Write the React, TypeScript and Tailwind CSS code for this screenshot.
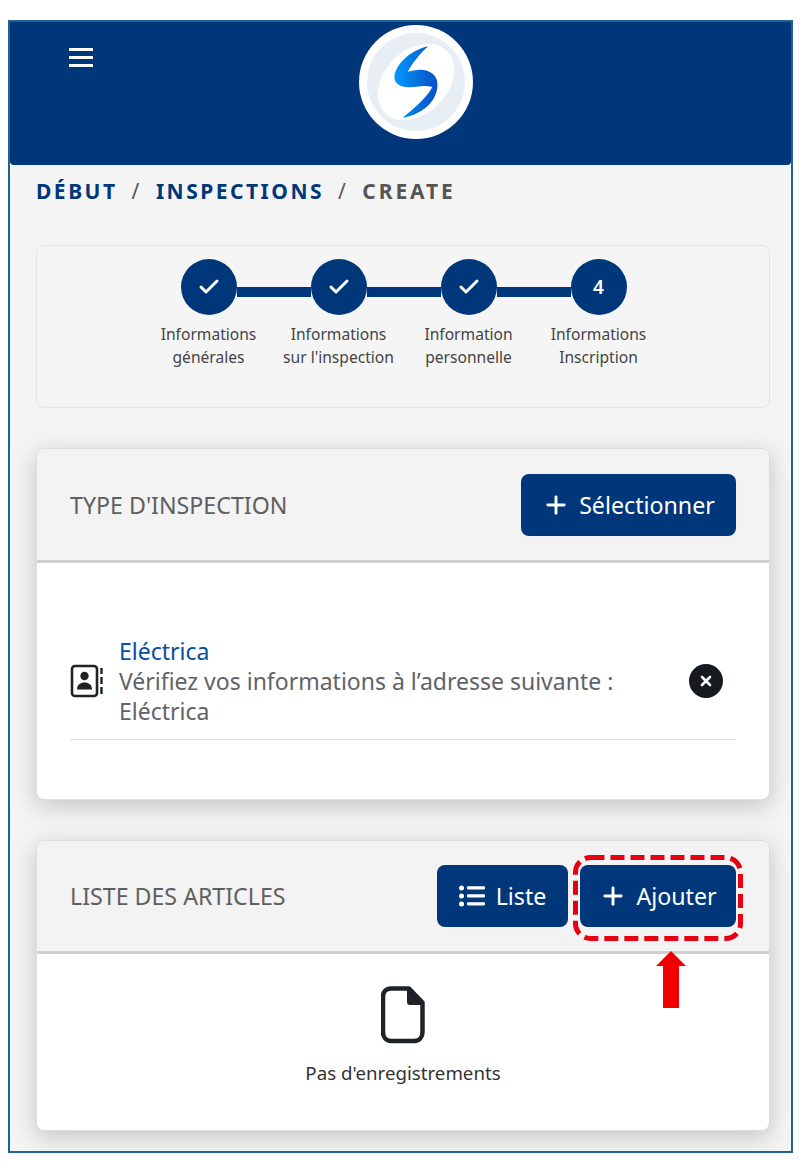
import { Check, Plus } from "lucide-react";

const FONT = "font-['Noto_Sans','Open_Sans',sans-serif]";

const STEPS = [
  { top: "Informations", bottom: "générales", done: true },
  { top: "Informations", bottom: "sur l'inspection", done: true },
  { top: "Information", bottom: "personnelle", done: true },
  { top: "Informations", bottom: "Inscription", done: false },
];

const Logo = () => (
  <div className="mt-[3px] ml-[266px] flex h-[114px] w-[114px] items-center justify-center rounded-full bg-white">
    <svg width="98" height="98" viewBox="0 0 96 96">
      <defs>
        <linearGradient id="swoosh" x1="0" y1="0" x2="1" y2="0">
          <stop offset="0" stopColor="#0098fd" />
          <stop offset="1" stopColor="#0a4fc4" />
        </linearGradient>
      </defs>
      <circle cx="48" cy="48" r="48" fill="#e7eff5" />
      <ellipse cx="48" cy="48" rx="43" ry="31" transform="rotate(-45 48 48)" fill="#fff" />
      <path
        d="M60 13 C45 16 30 28 27 41 C26 48 30 52 38 53 C46 54 55 50 64 53 C60 62 45 75 35 83 C50 81 68 70 69 52 C70 42 62 36 52 36 C48 36 44 37 40 38 C44 30 52 20 60 13 Z"
        fill="url(#swoosh)"
      />
    </svg>
  </div>
);

const Header = () => (
  <header className="flex h-[143px] rounded-b-[4px] bg-[#00377a] pl-[59px]">
    <div className="mt-[26px] flex h-[19px] w-[24px] flex-col justify-between">
      <span className="h-[3px] bg-white" />
      <span className="h-[3px] bg-white" />
      <span className="h-[3px] bg-white" />
    </div>
    <Logo />
  </header>
);

const Breadcrumb = () => (
  <nav className="mt-[12px] flex items-center pl-[26px] text-[21px] leading-[28px] font-bold tracking-[2.5px] text-[#00377a]">
    <span>DÉBUT</span>
    <span className="mx-[14px] font-normal text-[#555]">/</span>
    <span>INSPECTIONS</span>
    <span className="mx-[14px] font-normal text-[#555]">/</span>
    <span className="tracking-[2.9px] text-[#555]">CREATE</span>
  </nav>
);

const Stepper = () => (
  <section className="mt-[40px] mr-[21px] ml-[26px] h-[163px] rounded-[8px] border border-[#e2e6ea] bg-[#f5f5f5] pt-[13px] pl-[1px]">
    <div className="flex justify-center">
      {STEPS.map((s, i) => (
        <div key={i} className="flex items-center">
          <div className="flex h-[56px] w-[56px] items-center justify-center rounded-full bg-[#00377a] text-[19px] font-semibold text-white">
            {s.done ? <Check size={24} strokeWidth={3} /> : "4"}
          </div>
          {i < 3 && <div className="mt-[9px] h-[10px] w-[74px] bg-[#00377a]" />}
        </div>
      ))}
    </div>
    <div className="mt-[8px] flex justify-center text-center text-[15.6px] leading-[23px] text-[#444]">
      {STEPS.map((s, i) => (
        <div key={i} className="w-[130px] whitespace-nowrap">
          <div>{s.top}</div>
          <div>{s.bottom}</div>
        </div>
      ))}
    </div>
  </section>
);

const ActionButton = ({ children, width }: { children: React.ReactNode; width: string }) => (
  <button className={`flex h-[62px] items-center justify-center gap-[9px] rounded-[8px] bg-[#00377a] text-[23.2px] text-white ${width}`}>
    {children}
  </button>
);

const Card = ({
  title,
  actions,
  children,
  className,
  headerClass,
}: {
  title: string;
  actions: React.ReactNode;
  children: React.ReactNode;
  className: string;
  headerClass: string;
}) => (
  <section className={`mr-[21px] ml-[26px] overflow-hidden rounded-[8px] border border-[#dcdcdc] bg-white shadow-[0_6px_24px_rgba(0,0,0,0.2)] ${className}`}>
    <div className={`flex items-center justify-between border-b-[3px] border-[#cfcfcf] bg-[#f3f3f3] pr-[33px] pl-[33px] ${headerClass}`}>
      <h2 className="text-[23.2px] text-[#5f5f5f]">{title}</h2>
      <div className="flex gap-[12px]">{actions}</div>
    </div>
    {children}
  </section>
);

const ContactIcon = () => (
  <svg width="34" height="34" viewBox="0 0 34 34" fill="none">
    <rect x="2" y="2" width="25" height="30" rx="3" stroke="#1f2328" strokeWidth="2.6" />
    <circle cx="14.5" cy="12" r="4.2" fill="#1f2328" />
    <path d="M7 25.5c0-5 3.5-7 7.5-7s7.5 2 7.5 7z" fill="#1f2328" />
    <path d="M31.5 4v6M31.5 13v7M31.5 23v7" stroke="#1f2328" strokeWidth="2.4" />
  </svg>
);

const ListIcon = () => (
  <svg className="mr-[2px]" width="26" height="22" viewBox="0 0 26 22" fill="#fff">
    <circle cx="2.5" cy="3" r="2.5" />
    <circle cx="2.5" cy="11" r="2.5" />
    <circle cx="2.5" cy="19" r="2.5" />
    <rect x="8" y="1.2" width="18" height="3.4" rx="1" />
    <rect x="8" y="9.2" width="18" height="3.4" rx="1" />
    <rect x="8" y="17.2" width="18" height="3.4" rx="1" />
  </svg>
);

const FileIcon = () => (
  <svg width="44" height="58" viewBox="0 0 44 58" fill="none">
    <path
      d="M10 2.5h18l13.500 14V46c0 5-3 9-8 9H10c-5 0-8-4-8-9V11c0-5 3-8.500 8-8.500z"
      stroke="#1f2328"
      strokeWidth="4.5"
      strokeLinejoin="round"
    />
    <path d="M26 3v13c0 2 1 3 3 3h13z" fill="#1f2328" />
  </svg>
);

const CloseBadge = () => (
  <div className="flex h-[34px] w-[34px] items-center justify-center rounded-full bg-[#16191d]">
    <svg width="12" height="12" viewBox="0 0 12 12">
      <path d="M2 2l8 8M10 2l-8 8" stroke="#fff" strokeWidth="2.6" strokeLinecap="round" />
    </svg>
  </div>
);

const DashedBox = () => (
  <svg className="absolute top-[15px] left-[563px]" width="170" height="86" viewBox="0 0 170 86" fill="none">
    <rect x="2.5" y="2.5" width="165" height="81" rx="15" stroke="#e60012" strokeWidth="5" strokeDasharray="14 6" />
  </svg>
);

const Arrow = () => (
  <svg className="absolute top-[111px] left-[646px]" width="30" height="57" viewBox="0 0 30 57">
    <path d="M15 0L30 15H23V57H7V15H0Z" fill="#f00000" />
  </svg>
);

export default function App() {
  return (
    <div className={`h-[1161px] w-[799px] overflow-hidden bg-white pt-[20px] pl-[8px] ${FONT}`}>
      <div className="h-[1133px] w-[785px] overflow-hidden border-2 border-[#1f6490] bg-[#f4f4f4]">
        <Header />
        <Breadcrumb />
        <Stepper />
        <Card
          title="TYPE D'INSPECTION"
          className="mt-[40px] h-[352px]"
          headerClass="h-[114px] pt-[1px]"
          actions={
            <ActionButton width="w-[215px]">
              <Plus size={28} strokeWidth={2.5} />
              Sélectionner
            </ActionButton>
          }
        >
          <div className="mx-[33px] mt-[73px] flex items-center justify-between border-b border-[#dfe1e4] pb-[13px]">
            <div className="flex items-center gap-[15px]">
              <ContactIcon />
              <div className="text-[23px] leading-[30px] text-[#5f6368]">
                <div className="text-[#0a4ea0]">Eléctrica</div>
                <div>Vérifiez vos informations à l’adresse suivante :</div>
                <div>Eléctrica</div>
              </div>
            </div>
            <div className="mr-[13px]">
              <CloseBadge />
            </div>
          </div>
        </Card>
        <div className="relative">
          <Card
            title="LISTE DES ARTICLES"
            className="mt-[40px] h-[291px]"
            headerClass="h-[113px]"
            actions={
              <>
                <ActionButton width="w-[131px]">
                  <ListIcon />
                  Liste
                </ActionButton>
                <ActionButton width="w-[156px]">
                  <Plus size={28} strokeWidth={2.5} />
                  Ajouter
                </ActionButton>
              </>
            }
          >
            <div className="flex flex-col items-center pt-[32px]">
              <FileIcon />
              <p className="mt-[15px] text-[18.7px] text-[#333]">Pas d'enregistrements</p>
            </div>
          </Card>
          <DashedBox />
          <Arrow />
        </div>
      </div>
    </div>
  );
}
